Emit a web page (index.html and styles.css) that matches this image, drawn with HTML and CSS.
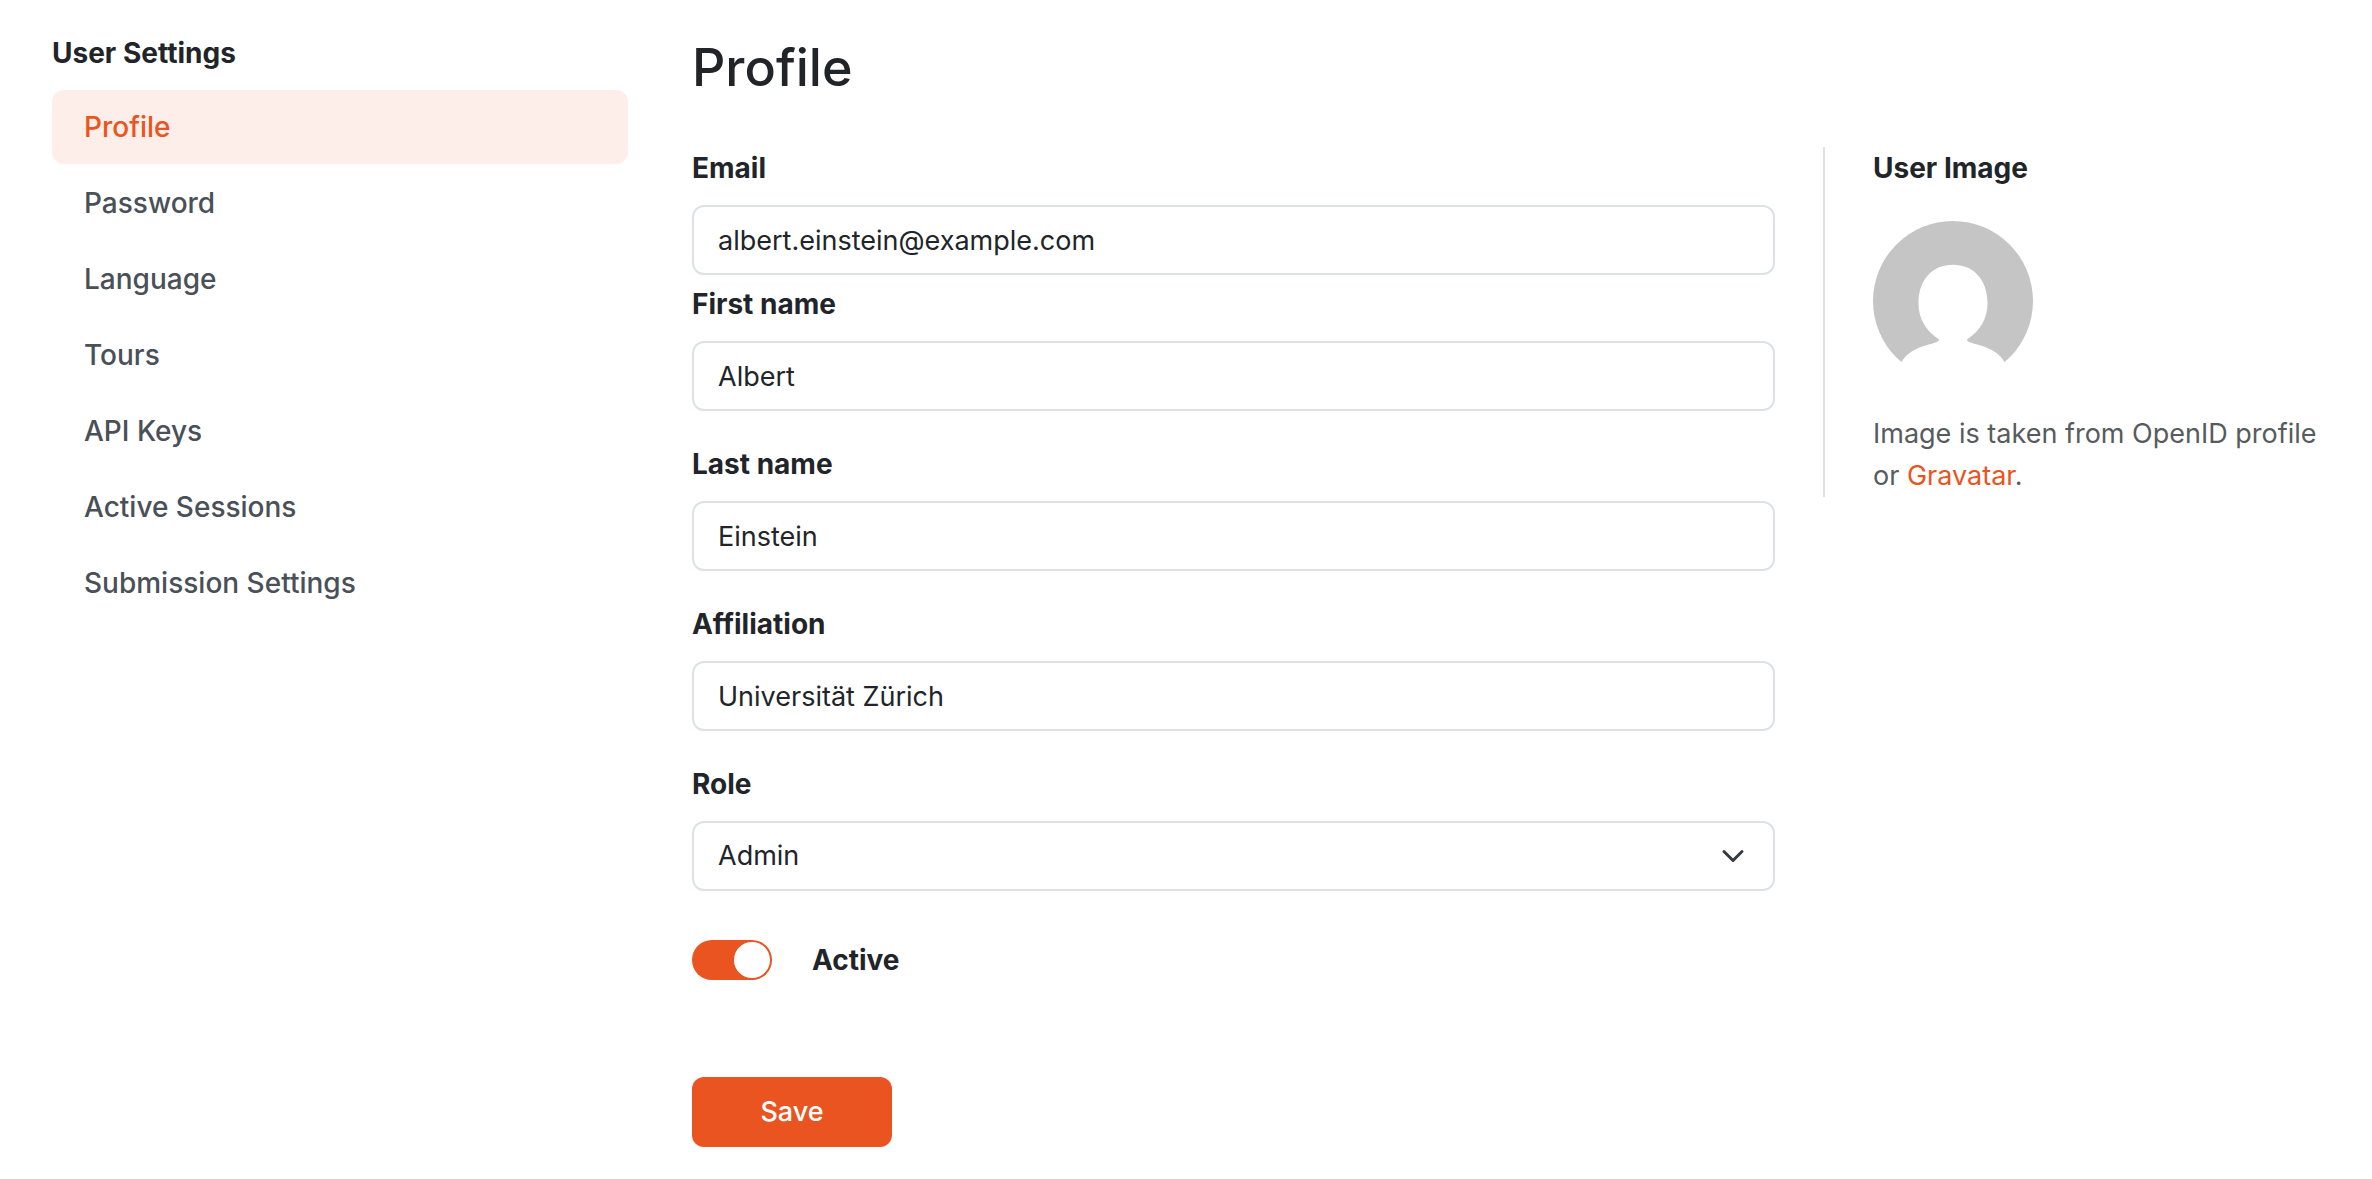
FILE: index.html
```html
<!DOCTYPE html>
<html lang="en">
<head>
  <meta charset="UTF-8">
  <meta name="viewport" content="width=device-width, initial-scale=1">
  <title>User Settings - Profile</title>
  <link rel="stylesheet" href="styles.css">
</head>
<body>

  <div class="page">
    <nav class="sidebar">
      <h2>User Settings</h2>
      <a class="nav-link active" href="#profile">Profile</a>
      <a class="nav-link" href="#password">Password</a>
      <a class="nav-link" href="#language">Language</a>
      <a class="nav-link" href="#tours">Tours</a>
      <a class="nav-link" href="#api-keys">API Keys</a>
      <a class="nav-link" href="#sessions">Active Sessions</a>
      <a class="nav-link" href="#submission">Submission Settings</a>
    </nav>

    <main class="content">
      <h1>Profile</h1>

      <div class="columns">
        <form class="profile-form">
          <div class="form-group email-group">
            <label for="email">Email</label>
            <input type="email" id="email" class="form-control" value="albert.einstein@example.com">
          </div>
          <div class="form-group">
            <label for="firstName">First name</label>
            <input type="text" id="firstName" class="form-control" value="Albert">
          </div>
          <div class="form-group">
            <label for="lastName">Last name</label>
            <input type="text" id="lastName" class="form-control" value="Einstein">
          </div>
          <div class="form-group">
            <label for="affiliation">Affiliation</label>
            <input type="text" id="affiliation" class="form-control" value="Universität Zürich">
          </div>
          <div class="form-group">
            <label for="role">Role</label>
            <select id="role" class="form-control form-select">
              <option selected>Admin</option>
              <option>Data Steward</option>
              <option>Researcher</option>
            </select>
          </div>
          <div class="form-switch">
            <input type="checkbox" id="active" class="switch" checked>
            <label for="active">Active</label>
          </div>
          <button type="submit" class="btn-save">Save</button>
        </form>

        <aside class="user-image">
          <h2>User Image</h2>
          <svg class="avatar" viewBox="0 0 160 160" role="img" aria-label="User image">
            <circle cx="80" cy="80" r="80" fill="#c5c5c5"/>
            <path fill="#fff" d="M28 142C33 132 43 127 54 124C61 122 66 121 66 118.500C52 109 45.500 97 45.500 82C45.500 58 60 43.700 80 43.700C100 43.700 114.500 58 114.500 82C114.500 97 108 109 94 118.500C94 121 99 122 106 124C117 127 127 132 132 142V161H28Z"/>
          </svg>
          <p>Image is taken from OpenID profile or <a href="#gravatar">Gravatar</a>.</p>
        </aside>
      </div>
    </main>
  </div>

</body>
</html>
```
FILE: styles.css
```css
:root {
  --primary: #e95420;
  --primary-light: #fdeee9;
  --text: #212529;
  --border: #dee2e6;
}

* {
  box-sizing: border-box;
}

body {
  margin: 0;
  font-family: Inter, sans-serif;
  font-size: 27px;
  line-height: 42px;
  color: var(--text);
  background: #fff;
}

h1, h2, p {
  margin: 0;
}

h1 {
  margin-bottom: 44px;
  font-size: 52px;
  line-height: 71px;
  font-weight: 500;
}

h2, label {
  font-size: 28px;
  line-height: 42px;
  font-weight: 700;
}

a {
  color: var(--primary);
  text-decoration: none;
}

.page {
  display: flex;
  gap: 64px;
  padding: 32px 44px 32px 52px;
}

/* Sidebar */
.sidebar {
  display: flex;
  flex-direction: column;
  flex: 0 0 576px;
  gap: 2px;
}

.sidebar h2 {
  margin-bottom: 14px;
}

.nav-link {
  padding: 16px 32px;
  border-radius: 12px;
  font-size: 28px;
  font-weight: 500;
  color: #495057;
}

.nav-link.active {
  color: var(--primary);
  background: var(--primary-light);
}

/* Form */
.content {
  flex: 1;
  min-width: 0;
}

.columns {
  display: flex;
  align-items: flex-start;
  gap: 48px;
}

.profile-form {
  flex: 1;
  min-width: 0;
}

.form-group {
  display: flex;
  flex-direction: column;
  gap: 16px;
  margin-bottom: 32px;
}

.email-group {
  margin-bottom: 8px;
}

.form-control {
  width: 100%;
  height: 70px;
  padding: 12px 24px;
  border: 2px solid var(--border);
  border-radius: 12px;
  font: inherit;
  color: var(--text);
  background-color: #fff;
}

.form-select {
  appearance: none;
  background-image: url("data:image/svg+xml,%3csvg xmlns='http://www.w3.org/2000/svg' viewBox='0 0 16 16'%3e%3cpath fill='none' stroke='%23343a40' stroke-linecap='round' stroke-linejoin='round' stroke-width='2' d='m2 5 6 6 6-6'/%3e%3c/svg%3e");
  background-repeat: no-repeat;
  background-position: right 24px center;
  background-size: 32px 24px;
}

.form-switch {
  display: flex;
  align-items: center;
  gap: 40px;
  margin: 48px 0 96px;
}

.switch {
  appearance: none;
  display: flex;
  width: 80px;
  height: 40px;
  margin: 0;
  padding: 2px;
  border-radius: 20px;
  background: #adb5bd;
  cursor: pointer;
}

.switch::before {
  content: "";
  width: 36px;
  height: 36px;
  border-radius: 50%;
  background: #fff;
}

.switch:checked {
  justify-content: flex-end;
  background: var(--primary);
}

.btn-save {
  width: 200px;
  height: 70px;
  border: none;
  border-radius: 12px;
  font: inherit;
  font-weight: 500;
  color: #fff;
  background: var(--primary);
  cursor: pointer;
}

/* User image */
.user-image {
  flex: 0 0 505px;
  padding-left: 48px;
  border-left: 2px solid var(--border);
}

.avatar {
  display: block;
  width: 160px;
  height: 160px;
  margin: 32px 0;
}

.user-image p {
  color: #585b5e;
}
```
